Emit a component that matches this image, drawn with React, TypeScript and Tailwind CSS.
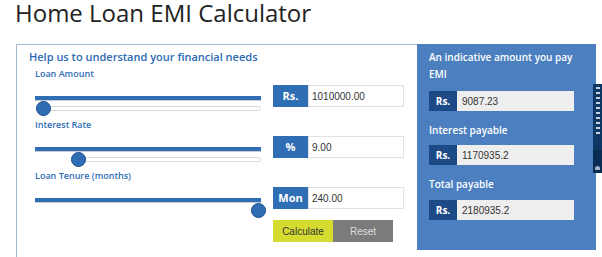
import React from 'react';

const sans = { fontFamily: '"Open Sans", "Noto Sans", sans-serif' };
const arial = { fontFamily: '"Liberation Sans", Arial, sans-serif' };

type SliderRow = {
  label: string;
  unit: string;
  value: string;
  pct: number;
};

const rows: SliderRow[] = [
  { label: 'Loan Amount', unit: 'Rs.', value: '1010000.00', pct: 0 },
  { label: 'Interest Rate', unit: '%', value: '9.00', pct: 0.163 },
  { label: 'Loan Tenure (months)', unit: 'Mon', value: '240.00', pct: 1 },
];

const results = [
  { label: 'Interest payable', value: '1170935.2' },
  { label: 'Total payable', value: '2180935.2' },
];

const Slider: React.FC<{ pct: number }> = ({ pct }) => {
  // handle centre runs from 8px to 223px inside the 226px track
  const centre = 8 + pct * 215;
  return (
    <div className="relative w-[226px] h-[22px]">
      <div className="mt-[11px] h-[5px] bg-[#2f6db5] border-b border-[#c9ced4]" />
      <div
        className="absolute top-[21px] right-0 h-[5px] bg-white border border-[#d9d9d9] rounded-full"
        style={{ left: centre }}
      />
      <div
        className="absolute top-[16px] w-[15px] h-[15px] rounded-full bg-[#2f6db5] border border-[#1a4b86]"
        style={{ left: centre - 7.5 }}
      />
    </div>
  );
};

const InputGroup: React.FC<{ unit: string; value: string }> = ({ unit, value }) => (
  <div className="flex h-[22px] w-[131px]">
    <div
      className="w-[35px] flex items-center justify-center bg-[#2f6db5] text-white text-[11px] font-bold"
      style={sans}
    >
      {unit}
    </div>
    <div
      className="flex-1 flex items-center pl-[3px] bg-white border border-[#e2e2e2] text-[10px] text-[#333]"
      style={arial}
    >
      {value}
    </div>
  </div>
);

const ResultBox: React.FC<{ value: string }> = ({ value }) => (
  <div className="flex h-[20px] w-[145px]">
    <div
      className="w-[28px] flex items-center justify-center bg-[#1b4a86] text-white text-[10px] font-bold"
      style={sans}
    >
      Rs.
    </div>
    <div className="flex-1 flex items-center pl-[5px] bg-[#eeeeee] text-[10px] text-[#333]" style={arial}>
      {value}
    </div>
  </div>
);

export default function App() {
  return (
    <div className="relative w-[602px] h-[257px] overflow-hidden bg-white">
      <h1 className="pl-[15px] text-[24px] leading-[26px] text-[#222] font-normal" style={sans}>
        Home Loan EMI Calculator
      </h1>

      <div className="flex mt-[18px] ml-[16px]">
        <div className="w-[401px] h-[213px] border-t border-l border-[#a3b9d1] pt-[3px] pl-[12px]">
          <h2 className="text-[11px] leading-[18px] font-semibold text-[#2b6ab3]" style={sans}>
            Help us to understand your financial needs
          </h2>
          <div className="pl-[6px] mt-[1px]">
            {rows.map((r) => (
              <div key={r.label} className="mb-[11px]">
                <div
                  className="text-[9px] leading-[14px] font-semibold text-[#2f6db5] mb-[4px]"
                  style={sans}
                >
                  {r.label}
                </div>
                <div className="flex gap-[12px]">
                  <Slider pct={r.pct} />
                  <InputGroup unit={r.unit} value={r.value} />
                </div>
              </div>
            ))}
            <div className="flex ml-[238px] mt-[1px] h-[22px] text-[10px]" style={arial}>
              <button className="w-[60px] bg-[#d5dc2f] text-[#333]">Calculate</button>
              <button className="w-[60px] bg-[#7b7b7b] text-[#dddddd]">Reset</button>
            </div>
          </div>
        </div>

        <div className="w-[179px] h-[206px] bg-[#4b7fc0] pt-[5px] pl-[12px] text-white" style={sans}>
          <div className="text-[10px] leading-[17px] font-semibold">An indicative amount you pay</div>
          <div className="text-[10px] leading-[17px] font-semibold">EMI</div>
          <div className="mt-[8px]">
            <ResultBox value="9087.23" />
          </div>
          {results.map((r, i) => (
            <div key={r.label}>
              <div className="mt-[11px] text-[10px] leading-[17px] font-semibold">{r.label}</div>
              <div className={i === 0 ? 'mt-[6px]' : 'mt-[7px]'}>
                <ResultBox value={r.value} />
              </div>
            </div>
          ))}
        </div>
      </div>

      {/* side feedback tab */}
      <div className="absolute left-[593px] top-[84px] w-[9px] h-[89px] bg-[#0f3765] flex flex-col">
        <div className="flex-1 flex flex-col items-center gap-[3px] pt-[3px]">
          {[0, 1, 2, 3, 4, 5, 6, 7, 8, 9].map((i) => (
            <div key={i} className="w-[4px] h-[2px] bg-[#c6d3e4]" />
          ))}
        </div>
        <div className="h-[23px] bg-[#0b2c52] flex items-end justify-center pb-[3px]">
          <div className="w-[5px] h-[4px] bg-[#9fb3cc] rounded-t-full" />
        </div>
      </div>
    </div>
  );
}
